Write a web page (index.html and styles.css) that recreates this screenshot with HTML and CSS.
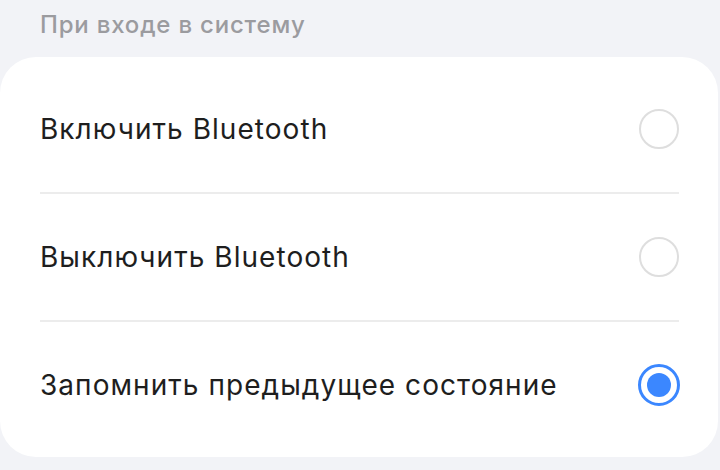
FILE: index.html
```html
<!DOCTYPE html>
<html lang="ru">
<head>
<meta charset="utf-8">
<link rel="stylesheet" href="styles.css">
</head>
<body>
<div class="page">
  <div class="section-title">При входе в систему</div>
  <div class="card">
    <div class="row">
      <span class="label">Включить Bluetooth</span>
      <span class="radio"></span>
    </div>
    <div class="divider"></div>
    <div class="row">
      <span class="label">Выключить Bluetooth</span>
      <span class="radio"></span>
    </div>
    <div class="divider"></div>
    <div class="row">
      <span class="label">Запомнить предыдущее состояние</span>
      <span class="radio checked"></span>
    </div>
  </div>
</div>
</body>
</html>
```

FILE: styles.css
```css
html, body {
  margin: 0;
  padding: 0;
  background: #f2f3f7;
}
.page {
  width: 720px;
  height: 470px;
  overflow: hidden;
  font-family: Inter, "Noto Sans", sans-serif;
}
.section-title {
  height: 57px;
  box-sizing: border-box;
  padding: 10px 0 0 40px;
  font-size: 24px;
  line-height: 29px;
  font-weight: 500;
  letter-spacing: 0.8px;
  color: #9b9b9f;
}
.card {
  width: 718px;
  box-sizing: border-box;
  background: #ffffff;
  border-radius: 36px;
  padding: 9px 39px 9px 40px;
}
.row {
  height: 126px;
  display: flex;
  align-items: center;
  justify-content: space-between;
}
.label {
  font-size: 28px;
  color: #1e1e1e;
  letter-spacing: 1.05px;
}
.divider {
  height: 2px;
  background: #ececec;
}
.radio {
  width: 40px;
  height: 40px;
  box-sizing: border-box;
  border: 2px solid #dedede;
  border-radius: 50%;
  display: flex;
  align-items: center;
  justify-content: center;
}
.radio.checked {
  width: 42px;
  height: 42px;
  margin-right: -1px;
  border: 3px solid #3b87ff;
}
.radio.checked::after {
  content: "";
  width: 24px;
  height: 24px;
  border-radius: 50%;
  background: #3b87ff;
}
```
